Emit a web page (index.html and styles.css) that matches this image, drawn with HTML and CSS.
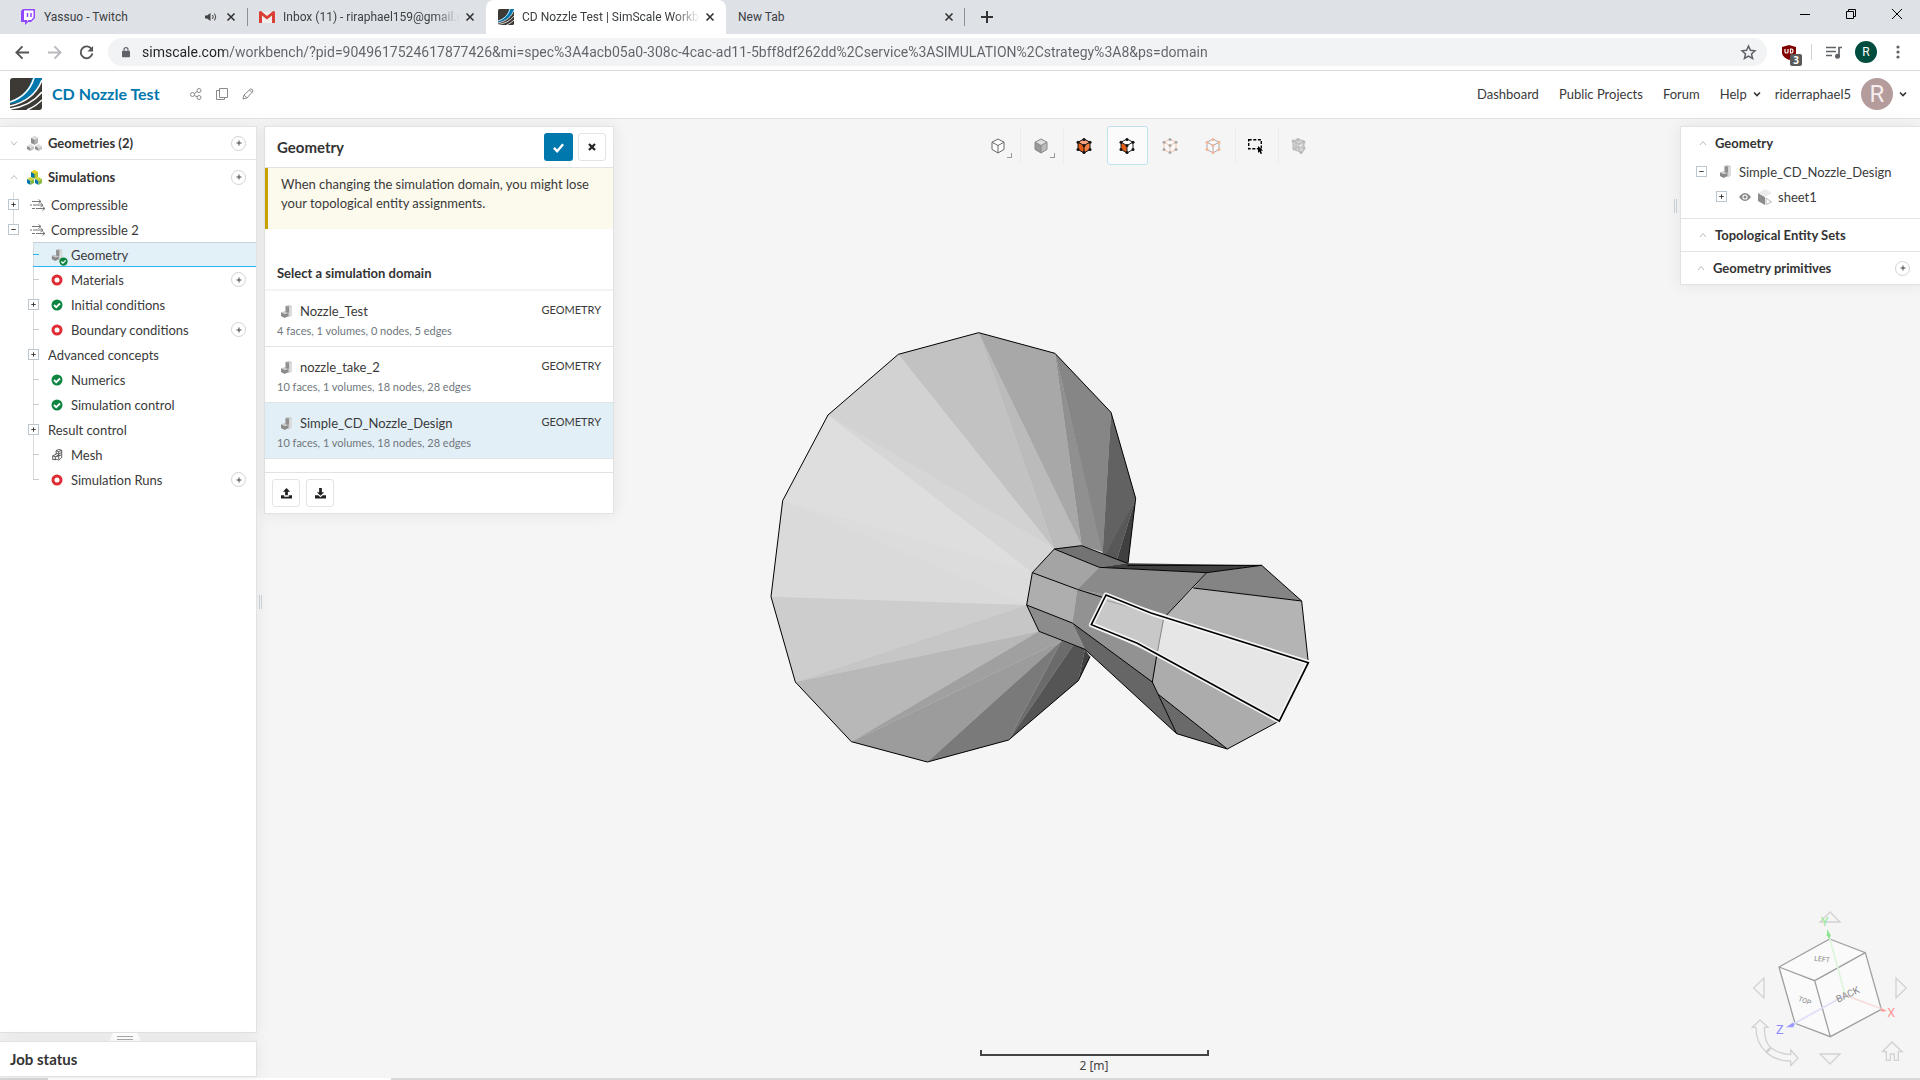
FILE: index.html
```html
<!DOCTYPE html>
<html lang="en">
<head>
<meta charset="utf-8">
<title>CD Nozzle Test | SimScale Workbench</title>
<link rel="stylesheet" href="styles.css">
</head>
<body>
<svg class="sprite" aria-hidden="true">
  <symbol id="x" viewBox="0 0 10 10"><path d="M1.5 1.5l7 7M8.500 1.500l-7 7" stroke="currentColor" stroke-width="1.600" fill="none"/></symbol>
  <symbol id="plus" viewBox="0 0 10 10"><path d="M2.500 5h5M5 2.500v5" stroke="currentColor" fill="none"/></symbol>
  <symbol id="minus" viewBox="0 0 10 10"><path d="M2.500 5h5" stroke="currentColor" fill="none"/></symbol>
  <symbol id="up" viewBox="0 0 8 8"><path d="M1 6l3-3.500L7 6" stroke="currentColor" fill="none"/></symbol>
  <symbol id="down" viewBox="0 0 8 8"><path d="M1 2.500L4 6l3-3.500" stroke="currentColor" fill="none"/></symbol>
  <symbol id="logo" viewBox="0 0 32 32"><rect width="32" height="32" rx="3" fill="#3d3935"/><path d="M22 0h10v2C27 16 16 24 0 26v-3C12 19 19 12 22 0z" fill="#0077ad"/><path d="M24 0C20 13 12 20 0 24M32 2C27 15 18 24 0 28M32 14C24 24 14 29 0 31M32 22c-5 5-10 8-15 10" fill="none" stroke="#fff" stroke-width="1.600"/></symbol>
  <symbol id="part" viewBox="0 0 12 14"><path d="M5 1l3-1 4 1v10l-3 2-4-1z" fill="#c4c4c4"/><path d="M5 1l4 1v6L5 9z" fill="#909090"/><path d="M9 2l3-1v10l-3 2z" fill="#dcdcdc"/><path d="M0 8l4-1 4 2v3l-4 2-4-2z" fill="#8a8a8a"/><path d="M0 8l4-1 4 2-4 1z" fill="#ccc"/></symbol>
  <symbol id="cubes" viewBox="0 0 15 15"><path d="M7.500 0L11 2v5L7.500 9 4 7V2z" fill="#b2b2b2"/><path d="M7.500 0L11 2 7.500 4 4 2zM3.500 8L7 10l-3.500 2L0 10zM11.500 8L15 10l-3.500 2L8 10z" fill="#ddd"/><path d="M0 10l3.500 2v3L0 13zM8 10l3.500 2v3L8 13zM4 2l3.500 2v4L4 7z" fill="#8c8c8c"/><path d="M7 10v3l-3.500 2v-3zM15 10v3l-3.500 2v-3z" fill="#c4c4c4"/></symbol>
  <symbol id="cubes-color" viewBox="0 0 15 15"><path d="M7.500 0L11 2v5L7.500 9 4 7V2z" fill="#b5c326"/><path d="M7.500 0L11 2 7.500 4 4 2z" fill="#f0d526"/><path d="M3.500 7L7 9 3.500 11 0 9zM11.500 7L15 9l-3.500 2L8 9z" fill="#cbd33a"/><path d="M0 9l3.500 2v4L0 13zM8 9l3.500 2v4L8 13zM4 2l3.500 2v4L4 7z" fill="#0075ac"/><path d="M7 9v4l-3.500 2v-4zM15 9v4l-3.500 2v-4z" fill="#86b942"/></symbol>
  <symbol id="flow" viewBox="0 0 15 12"><path d="M2 2.500h9M0 6h2m1 0h10M2 9.500h3m1 0h9M8.500 .5l2.500 2-2.500 2M10.500 4l2.500 2-2.500 2M12.500 7.500l2.500 2-2.500 2" fill="none" stroke="#777"/></symbol>
  <symbol id="ring" viewBox="0 0 12 12"><circle cx="6" cy="6" r="4" fill="none" stroke="#e02d36" stroke-width="3"/></symbol>
  <symbol id="ok" viewBox="0 0 12 12"><circle cx="6" cy="6" r="5.500" fill="#0d8440"/><path d="M3 6l2.200 2.200L9 4.500" fill="none" stroke="#fff" stroke-width="1.800"/></symbol>
  <symbol id="mesh" viewBox="0 0 12 14"><path d="M5 2l3-1.500 3.500 1V10L8 13l-3-1-4 .5V8l4-2zM5 2l3 1v9M8 3l3.500-1.500M1 8l3 1v4M4 9l4-2M5 5l3 1 3.500-2M5 9l6-2" fill="none" stroke="#444"/></symbol>
  <symbol id="cube" viewBox="0 0 16 16"><path d="M8 1l6 3.200v7.200L8 15l-6-3.600V4.200z" class="f"/><path d="M2 4.200L8 7.500v7.500l-6-3.600z" class="l"/><path d="M8 1l6 3.200-6 3.300-6-3.300z" class="t"/><path d="M8 1l6 3.200v7.200L8 15l-6-3.600V4.200zM2 4.200l6 3.300 6-3.300M8 7.500V15" class="s"/></symbol>
  <symbol id="dots" viewBox="0 0 16 16"><g fill="currentColor"><circle cx="8" cy="1.500" r="1.500"/><circle cx="14" cy="4.200" r="1.500"/><circle cx="14" cy="11.400" r="1.500"/><circle cx="8" cy="14.500" r="1.500"/><circle cx="2" cy="11.400" r="1.500"/><circle cx="2" cy="4.200" r="1.500"/><circle cx="8" cy="7.500" r="1.500"/></g></symbol>
</svg>

<header class="browser">
  <div class="tabs">
    <div class="tab">
      <svg class="fav" viewBox="0 0 16 16"><path d="M1 2l2-2h12v9l-4 4H8l-3 3v-3H1z" fill="#9146ff"/><path d="M4 1.500h9.500v7L11 11H8.500L7 12.500V11H4z" fill="#fff"/><path d="M7.500 4v4M11 4v4" stroke="#9146ff" stroke-width="1.500"/></svg>
      <span class="tab-title">Yassuo - Twitch</span>
      <svg class="sound" viewBox="0 0 12 10"><path d="M0 3.500h2L5.500 1v8L2 6.500H0z" fill="#444"/><path d="M7.500 3q1.500 2 0 4M9.500 1.500q2.500 3.500 0 7" fill="none" stroke="#444"/></svg>
      <button class="close" aria-label="Close tab"><svg><use href="#x"/></svg></button>
    </div>
    <div class="tab ruled">
      <svg class="fav" viewBox="0 0 16 16"><path d="M1 3h14v11H1z" fill="#f1eeee"/><path d="M0 14V3q1-1.500 2.500-.5L8 7l5.500-4.500Q15 1.500 16 3v11h-3V6.500l-5 4-5-4V14z" fill="#d93f35"/></svg>
      <span class="tab-title fade">Inbox (11) - riraphael159@gmail.c</span>
      <button class="close" aria-label="Close tab"><svg><use href="#x"/></svg></button>
    </div>
    <div class="tab active">
      <svg class="fav" viewBox="0 0 16 16"><use href="#logo"/></svg>
      <span class="tab-title fade">CD Nozzle Test | SimScale Workbe</span>
      <button class="close" aria-label="Close tab"><svg><use href="#x"/></svg></button>
    </div>
    <div class="tab last">
      <span class="tab-title">New Tab</span>
      <button class="close" aria-label="Close tab"><svg><use href="#x"/></svg></button>
    </div>
    <button class="newtab" aria-label="New tab"><svg viewBox="0 0 12 12"><path d="M6 0v12M0 6h12" stroke="#333" stroke-width="2"/></svg></button>
    <div class="window">
      <button aria-label="Minimize"><svg viewBox="0 0 10 10"><path d="M0 5.500h10" stroke="#000"/></svg></button>
      <button aria-label="Restore"><svg viewBox="0 0 10 10"><path d="M.5 2.500h7v7h-7zM2.500 2V.5h7v7H8" stroke="#000" fill="none"/></svg></button>
      <button aria-label="Close window"><svg viewBox="0 0 10 10"><path d="M0 0l10 10M10 0L0 10" stroke="#000"/></svg></button>
    </div>
  </div>
  <div class="nav">
    <button aria-label="Back"><svg viewBox="0 0 16 16"><path d="M15 8H2M8 1.500L1.500 8 8 14.500" fill="none" stroke="#555" stroke-width="2"/></svg></button>
    <button aria-label="Forward"><svg viewBox="0 0 16 16"><path d="M1 8h13M8 1.500L14.500 8 8 14.500" fill="none" stroke="#b8babd" stroke-width="2"/></svg></button>
    <button aria-label="Reload"><svg viewBox="0 0 16 16"><path d="M13.500 4.500A6.300 6.300 0 1 0 14.300 9" fill="none" stroke="#555" stroke-width="2"/><path d="M15 1v6H9z" fill="#555"/></svg></button>
    <div class="omnibox">
      <svg class="lock" viewBox="0 0 10 13"><rect y="5" width="10" height="8" rx="1" fill="#5f6368"/><path d="M2.500 5V3.500a2.500 2.500 0 0 1 5 0V5" fill="none" stroke="#5f6368" stroke-width="1.500"/></svg>
      <input class="url" type="text" aria-label="Address" value="simscale.com/workbench/?pid=9049617524617877426&amp;mi=spec%3A4acb05a0-308c-4cac-ad11-5bff8df262dd%2Cservice%3ASIMULATION%2Cstrategy%3A8&amp;ps=domain">
      <button aria-label="Bookmark"><svg class="star" viewBox="0 0 14 14"><path d="M7 1l1.800 4 4.200.4-3.200 2.900 1 4.300L7 10.400l-3.800 2.200 1-4.300L1 5.400 5.200 5z" fill="none" stroke="#5f6368" stroke-width="1.400"/></svg></button>
    </div>
    <div class="ext"><svg viewBox="0 0 14 15"><path d="M7 0l7 2v5c0 4-3 6-7 8-4-2-7-4-7-8V2z" fill="#800000"/><path d="M3 4v3q0 1 1.500 1T6 7V4M8.500 4v4h1Q11 8 11 6T9.500 4z" stroke="#fff" stroke-width="1.200" fill="none"/></svg><span class="badge">3</span></div>
    <span class="vr"></span>
    <svg class="music" viewBox="0 0 16 13"><path d="M0 1.500h10M0 5.500h10M0 9.500h6M13 10V1.500h3" stroke="#5f6368" stroke-width="1.700" fill="none"/><circle cx="11.500" cy="10.200" r="2.500" fill="#5f6368"/></svg>
    <span class="me">R</span>
    <button aria-label="Menu"><svg class="dots" viewBox="0 0 4 14"><g fill="#5f6368"><circle cx="2" cy="2" r="1.600"/><circle cx="2" cy="7" r="1.600"/><circle cx="2" cy="12" r="1.600"/></g></svg></button>
  </div>
</header>

<header class="app">
  <svg class="logo" viewBox="0 0 32 32"><use href="#logo"/></svg>
  <h1>CD Nozzle Test</h1>
  <div class="tools">
    <button aria-label="Share"><svg viewBox="0 0 12 12"><g fill="none" stroke="#8a8a8a"><circle cx="2.500" cy="6.500" r="2"/><circle cx="9" cy="2.500" r="2"/><circle cx="9" cy="9.500" r="2"/><path d="M4.300 5.500l3-2M4.300 7.500l3 1.300"/></g></svg></button>
    <button aria-label="Copy"><svg viewBox="0 0 12 12"><path d="M3.500.5h8v9h-8zM3.500 2.500h-3v9h8v-2" fill="none" stroke="#8a8a8a"/></svg></button>
    <button aria-label="Edit"><svg viewBox="0 0 12 12"><path d="M1 11l1-4 6.500-6q2-.5 2.500 2L5 10zM7.500 2l2.500 2.500M2 7l3 3" fill="none" stroke="#8a8a8a"/></svg></button>
  </div>
  <nav>
    <a href="#">Dashboard</a><a href="#">Public Projects</a><a href="#">Forum</a>
    <a href="#" class="help">Help <svg viewBox="0 0 8 8"><path d="M1 2.500l3 3 3-3" stroke="#333" stroke-width="1.600" fill="none"/></svg></a>
    <a href="#" class="user">riderraphael5 <span class="avatar">R</span><svg viewBox="0 0 8 8"><path d="M1 2.500l3 3 3-3" stroke="#333" stroke-width="1.600" fill="none"/></svg></a>
  </nav>
</header>

<main>
  <svg class="scene" viewBox="-2280 -603 5760 2877" aria-label="Nozzle model">
    <g>
      <path fill="#dadada" d="M656 38L885 100 1053 277 1127 535 1104 730 990 1010 955 1082 746 1260 502 1326 274 1265 106 1086 33 830 68 542 204 285 415 103z"/>
      <path fill="#d2d2d2" d="M204 285L415 103 883 687z"/><path fill="#d6d6d6" d="M204 285L883 687 817 758z"/>
      <path fill="#c2c2c2" d="M415 103L656 38 883 687z"/><path fill="#bbb" d="M656 38L965 677 883 687z"/>
      <path fill="#a8a8a8" d="M656 38L885 100 965 677z"/><path fill="#909090" d="M885 100L1028 695 965 677z"/>
      <path fill="#868686" d="M885 100L1053 277 1028 702z"/><path fill="#626262" d="M1053 277L1127 535 1040 705 1028 700z"/>
      <path fill="#585858" d="M1127 535L1070 722 1036 705z"/><path fill="#404040" d="M1127 535L1104 730 1070 722z"/>
      <path fill="#dedede" d="M204 285L68 542 817 758z"/><path fill="#dcdcdc" d="M68 542L800 855 817 758z"/>
      <path fill="#cdcdcd" d="M33 830L106 1086 800 855z"/><path fill="#c6c6c6" d="M106 1086L800 855 837 934z"/>
      <path fill="#b8b8b8" d="M106 1086L274 1265 837 934z"/><path fill="#a0a0a0" d="M274 1265L837 934 905 962z"/>
      <path fill="#9c9c9c" d="M274 1265L502 1326 905 962z"/><path fill="#7a7a7a" d="M502 1326L746 1260 905 962z"/>
      <path fill="#6b6b6b" d="M746 1260L905 962 940 975z"/><path fill="#555" d="M746 1260L955 1082 975 988 940 975z"/>
      <path fill="#404040" d="M955 1082L990 1010 975 988z"/>
      <path fill="#737373" d="M883 687L965 677 1102 730 1018 742z"/><path fill="#a4a4a4" d="M883 687L1018 742 952 808 817 758z"/>
      <path fill="#aeaeae" d="M817 758L952 808 937 909 800 855z"/><path fill="#8c8c8c" d="M800 855L937 909 975 988 837 934z"/>
      <path fill="#404040" d="M1018 742L1102 730 1505 736 1340 758z"/>
      <path fill="#8a8a8a" d="M1018 742L1340 758 1220 885 1038 825 952 808z"/>
      <path fill="#929292" d="M952 808L1038 825 1200 1010 1177 1086 937 909z"/>
      <path fill="#666" d="M937 909L1177 1086 1250 1241 975 988z"/>
      <path fill="#848484" d="M1340 758L1505 736 1625 843 1300 804z"/>
      <path fill="#b4b4b4" d="M1300 804L1625 843 1645 1028 1215 890z"/>
      <path fill="#acacac" d="M1190 1008L1558 1203 1402 1287 1195 1123 1178 1087z"/>
      <path fill="#6a6a6a" d="M1178 1087L1195 1123 1402 1287 1250 1241z"/>
      <path fill="#c8c8c8" d="M1038 825L1215 892 1190 1008 994 914z"/>
      <path fill="#e6e6e6" d="M1215 890L1645 1028 1558 1203 1190 1008z"/>
    </g>
    <g fill="none" stroke="#000" stroke-width="3">
      <path d="M1104 730L1127 535 1053 277 885 100 656 38 415 103 204 285 68 542 33 830 106 1086 274 1265 502 1326 746 1260 955 1082 990 1010"/>
      <path d="M1102 730L965 677 883 687 817 758 800 855 837 934 975 988 1250 1241 1402 1287 1558 1203M883 687L1018 742 1340 758 1505 736H1102M817 758L952 808 1030 833M800 855L937 909 1177 1086 1250 1241M1177 1086L1190 1008M1195 1123L1402 1287M1340 758L1220 885M1300 804L1625 843M1505 736L1625 843 1645 1028"/>
    </g>
    <path d="M1210 900L1193 993" stroke="#888" stroke-width="3"/><path d="M1042 842L1120 863" stroke="#999" stroke-width="3"/>
    <path d="M1038 825L1173 879 1645 1028 1558 1203 1132 970 994 914z" fill="none" stroke="#f5f5f5" stroke-width="15" stroke-linejoin="round"/>
    <path d="M1038 825L1173 879 1645 1028 1558 1203 1132 970 994 914z" fill="none" stroke="#000" stroke-width="5"/>
  </svg>

  <div class="left">
    <aside class="tree">
      <section class="head"><svg class="chev"><use href="#down"/></svg><svg class="i15"><use href="#cubes"/></svg><h2>Geometries (2)</h2><button class="add" aria-label="Add geometry"><svg><use href="#plus"/></svg></button></section>
      <section class="head sims"><svg class="chev"><use href="#up"/></svg><svg class="i15"><use href="#cubes-color"/></svg><h2>Simulations</h2><button class="add" aria-label="Add simulation"><svg><use href="#plus"/></svg></button></section>
      <ul class="roots">
        <li class="row"><button class="tog" aria-label="Expand"><svg><use href="#plus"/></svg></button><svg class="flow"><use href="#flow"/></svg><span>Compressible</span></li>
        <li class="row end"><button class="tog" aria-label="Collapse"><svg><use href="#minus"/></svg></button><svg class="flow"><use href="#flow"/></svg><span>Compressible 2</span></li>
      </ul>
      <ul class="kids">
        <li class="row selected"><i class="dash"></i><span class="ic"><svg class="part"><use href="#part"/></svg><svg class="sub"><use href="#ok"/></svg></span><span>Geometry</span></li>
        <li class="row"><i class="dash"></i><span class="ic"><svg><use href="#ring"/></svg></span><span>Materials</span><button class="add" aria-label="Add material"><svg><use href="#plus"/></svg></button></li>
        <li class="row"><button class="tog" aria-label="Expand"><svg><use href="#plus"/></svg></button><span class="ic"><svg><use href="#ok"/></svg></span><span>Initial conditions</span></li>
        <li class="row"><i class="dash"></i><span class="ic"><svg><use href="#ring"/></svg></span><span>Boundary conditions</span><button class="add" aria-label="Add boundary condition"><svg><use href="#plus"/></svg></button></li>
        <li class="row plain"><button class="tog" aria-label="Expand"><svg><use href="#plus"/></svg></button><span>Advanced concepts</span></li>
        <li class="row"><i class="dash"></i><span class="ic"><svg><use href="#ok"/></svg></span><span>Numerics</span></li>
        <li class="row"><i class="dash"></i><span class="ic"><svg><use href="#ok"/></svg></span><span>Simulation control</span></li>
        <li class="row plain"><button class="tog" aria-label="Expand"><svg><use href="#plus"/></svg></button><span>Result control</span></li>
        <li class="row"><i class="dash"></i><span class="ic"><svg><use href="#mesh"/></svg></span><span>Mesh</span></li>
        <li class="row end"><i class="dash"></i><span class="ic"><svg><use href="#ring"/></svg></span><span>Simulation Runs</span><button class="add" aria-label="Add run"><svg><use href="#plus"/></svg></button></li>
      </ul>
    </aside>
    <button class="grip" aria-label="Resize job status"><svg viewBox="0 0 32 8"><path d="M4 0h24l4 8H0z" fill="#fff"/><path d="M8 3.500h16M8 6.500h16" stroke="#aaa"/></svg></button>
    <section class="jobs"><h2>Job status</h2></section>
  </div>

  <i class="handle mid"></i>

  <section class="panel">
    <header><h2>Geometry</h2>
      <button class="primary" aria-label="Confirm"><svg viewBox="0 0 12 12"><path d="M1 6.500L4.500 10 11 2.500" fill="none" stroke="#fff" stroke-width="2.600"/></svg></button>
      <button class="box" aria-label="Close"><svg viewBox="0 0 8 8"><path d="M1 1l6 6M7 1L1 7" stroke="#222" stroke-width="2.200"/></svg></button>
    </header>
    <p class="warn">When changing the simulation domain, you might lose your topological entity assignments.</p>
    <h3>Select a simulation domain</h3>
    <ul>
      <li><div class="name"><svg><use href="#part"/></svg><span>Nozzle_Test</span><em>GEOMETRY</em></div><small>4 faces, 1 volumes, 0 nodes, 5 edges</small></li>
      <li><div class="name"><svg><use href="#part"/></svg><span>nozzle_take_2</span><em>GEOMETRY</em></div><small>10 faces, 1 volumes, 18 nodes, 28 edges</small></li>
      <li class="on"><div class="name"><svg><use href="#part"/></svg><span>Simple_CD_Nozzle_Design</span><em>GEOMETRY</em></div><small>10 faces, 1 volumes, 18 nodes, 28 edges</small></li>
    </ul>
    <footer>
      <button class="box" aria-label="Upload"><svg viewBox="0 0 12 12"><path d="M6 0l4 4H7.500v4h-3V4H2z M0 8h3.500v1.500h5V8H12v3.500H0z" fill="#222"/></svg></button>
      <button class="box" aria-label="Download"><svg viewBox="0 0 12 12"><path d="M6 8.500l4-4H7.500V0h-3v4.500H2z M0 8h3.500l2.500 2 2.500-2H12v3.500H0z" fill="#222"/></svg></button>
    </footer>
  </section>

  <div class="center">
    <div class="modes">
      <button class="cube wire more" aria-label="Wireframe"><svg><use href="#cube"/></svg></button><i></i>
      <button class="cube grey more" aria-label="Shading"><svg><use href="#cube"/></svg></button><i></i>
      <button class="cube orange" aria-label="Select volumes"><svg><use href="#cube"/><use href="#dots"/></svg></button>
      <button class="cube face current" aria-label="Select faces"><svg><use href="#cube"/><use href="#dots"/></svg></button>
      <button class="cube edge" aria-label="Select edges"><svg><use href="#cube"/><use href="#dots"/></svg></button>
      <button class="cube node" aria-label="Select nodes"><svg><use href="#cube"/><use href="#dots"/></svg></button><i></i>
      <button aria-label="Box selection"><svg viewBox="0 0 16 16"><path d="M.7 1.700h12.600v9H.7z" fill="none" stroke="#000" stroke-width="1.400" stroke-dasharray="3 1.600"/><path d="M10 8l5 4.500-2 .3 1 2.700-1.400.5-1.200-2.600L10 15z" fill="#000"/></svg></button><i></i>
      <button class="cube off" aria-label="Mesh clip"><svg viewBox="0 0 16 16"><path d="M2 3l5-2 6 2v9l-2 3-9-4zM2 3l6 3v7M8 6l5-3M5 2v10M2 7l6 3 5-3" fill="#ccc" stroke="#aaa"/><g fill="#aaa"><circle cx="2" cy="3" r="1.500"/><circle cx="7" cy="1.500" r="1.500"/><circle cx="13" cy="4" r="1.500"/><circle cx="13" cy="10" r="1.500"/><circle cx="10" cy="14.500" r="1.500"/><circle cx="3" cy="11" r="1.500"/></g></svg></button>
    </div>
    <div class="scale"><div class="bar"></div><span>2 [m]</span></div>
  </div>

  <i class="handle right"></i>

  <aside class="objects">
    <section class="objtree">
      <h2><svg class="chev"><use href="#up"/></svg>Geometry</h2>
      <ul>
        <li class="o1"><button class="tog" aria-label="Collapse"><svg><use href="#minus"/></svg></button><svg class="part"><use href="#part"/></svg><span>Simple_CD_Nozzle_Design</span></li>
        <li class="o2"><button class="tog" aria-label="Expand"><svg><use href="#plus"/></svg></button><svg class="eye" viewBox="0 0 12 8"><path d="M0 4q6-8 12 0-6 8-12 0z" fill="#8c8c8c"/><circle cx="6" cy="4" r="2.600" fill="#fff"/><circle cx="6" cy="4" r="1.500" fill="#8c8c8c"/></svg><svg class="sheet" viewBox="0 0 14 16"><path d="M0 4l7 4v8l-7-4z" fill="#8c8c8c"/><path d="M0 4l7-4 7 4-7 4z" fill="#ececec"/><path d="M8 9l5.500 4L8 15.500z" fill="#fff" stroke="#bbb"/></svg><span>sheet1</span></li>
      </ul>
    </section>
    <h2><svg class="chev"><use href="#up"/></svg>Topological Entity Sets</h2>
    <h2 class="prim"><svg class="chev"><use href="#up"/></svg>Geometry primitives<button class="add" aria-label="Add primitive"><svg><use href="#plus"/></svg></button></h2>
  </aside>

  <svg class="viewcube" viewBox="0 0 540 534" aria-label="View cube">
    <g fill="none" stroke="#d2d2d2" stroke-width="4"><path d="M240 66h60l-30-30zM240 462h60l-30 30zM72 234v60l-31-30zM468 234v60l31-30zM60 360l24 22H73q0 44 18 60L78 455Q48 430 48 382H37zM80 458l14-14q24 18 58 20v-14l22 24-22 23v-14Q110 484 80 458zM427 455l29-29 30 29h-11v26h-12v-19h-12v19h-12v-26z"/></g>
    <path d="M269 117l107 41 48 170-153 82-106-40L117 201z" fill="#fafafa"/>
    <path d="M269 117l107 41 48 170-153 82-106-40L117 201zM117 201l107 41 152-84M224 242l47 168" fill="none" stroke="#a0a0a0" stroke-width="4"/>
    <path d="M316 286L268 112" stroke="#dcf5dc" stroke-width="5"/><path d="M316 286L160 372" stroke="#dedef8" stroke-width="5"/><path d="M316 286l112 42" stroke="#f8dcdc" stroke-width="5"/>
    <path d="M262 88l10 18-4 12-8-12z" fill="#8fe58f"/><path d="M138 382l20-14 6 4-4 10z" fill="#9a9aff"/><path d="M441 333l-20-10 4 12z" fill="#ff9a9a"/>
    <g class="axes"><text x="243" y="79" fill="#96ea96">Y</text><text x="108" y="401" fill="#8c8cff">Z</text><text x="442" y="350" fill="#ff9696">X</text></g>
    <g class="faces"><text transform="translate(294 308) rotate(-25)" font-size="29">BACK</text><text transform="translate(173 302) rotate(20)" font-size="21">TOP</text><text transform="translate(222 182) rotate(6)" font-size="21">LEFT</text></g>
  </svg>
</main>
<div class="strip"></div>
</body>
</html>
```
FILE: styles.css
```css
* { box-sizing: border-box; }
body { margin: 0; height: 100vh; display: flex; flex-direction: column; overflow: hidden; font: 13px/20px Lato, "Liberation Sans", sans-serif; color: #3a3a3a; background: #f5f5f5; }
button { border: 0; padding: 0; background: none; display: flex; align-items: center; justify-content: center; flex: none; }
svg { flex: none; display: block; overflow: visible; }
h1, h2, h3, ul, p { margin: 0; padding: 0; list-style: none; }
h2, h3 { font-size: 13px; line-height: 20px; font-weight: 700; color: #333; }
a { color: inherit; text-decoration: none; }
.sprite { display: none; }

/* Browser window */
.browser { background: #fff; border-bottom: 1px solid #d9dadc; font-family: "Noto Sans", "Open Sans", sans-serif; font-weight: 400; }
.tabs { display: flex; height: 34px; background: #dee1e6; }
.tab { display: flex; align-items: center; width: 239px; padding: 0 10px 0 12px; font: 12px/20px Roboto, "Open Sans", sans-serif; color: #3c4043; }
.tab:first-child { width: 247px; padding-left: 20px; }
.tab.ruled { background: linear-gradient(#8c8f94, #8c8f94) 0 8px / 1px 18px no-repeat; }
.tab.active { background: #fff; border-radius: 8px 8px 0 0; width: 240px; }
.tab.last { background: linear-gradient(#8c8f94, #8c8f94) 100% 8px / 1px 18px no-repeat; }
.tab-title { flex: 1; overflow: hidden; white-space: nowrap; margin: 0 8px; }
.tab.last .tab-title { margin-left: 0; }
.fade { margin-right: 4px; mask-image: linear-gradient(90deg, #000 85%, transparent); }
.fav { width: 16px; height: 16px; }
.sound { width: 12px; height: 10px; margin-right: 8px; }
.close { width: 12px; height: 12px; color: #333; }
.close svg { width: 10px; height: 10px; }
.newtab { width: 44px; }
.newtab svg { width: 12px; height: 12px; }
.window { display: flex; margin-left: auto; }
.window button { width: 46px; height: 28px; }
.window svg { width: 10px; height: 10px; }
.nav { display: flex; align-items: center; height: 36px; padding: 0 6px; }
.nav > button { width: 32px; height: 32px; }
.nav > button svg { width: 15px; height: 15px; }
.omnibox { flex: 1; display: flex; align-items: center; height: 28px; margin: 0 15px 0 6px; padding: 0 11px 0 14px; border-radius: 14px; background: #f1f3f4; }
.lock { width: 8px; height: 12px; margin-right: 12px; }
.url { flex: 1; min-width: 0; border: 0; padding: 0; outline: 0; font: 14px/20px Roboto, "Open Sans", sans-serif; color: transparent; background: linear-gradient(90deg, #202124 83px, #5f6368 83px); background-clip: text; -webkit-background-clip: text; }
.star { width: 15px; height: 15px; }
.ext { position: relative; }
.ext svg { width: 14px; height: 15px; }
.badge { position: absolute; left: 8px; top: 9px; width: 12px; height: 12px; border-radius: 2px; background: #5a5a5a; color: #fff; font: 700 10px/12px "Open Sans", sans-serif; text-align: center; }
.vr { width: 1px; height: 16px; background: #d0d2d5; margin: 0 14px 0 15px; }
.music { width: 16px; height: 13px; }
.me { width: 22px; height: 22px; margin: 0 5px 0 13px; border-radius: 50%; background: #004d40; color: #fff; font: 12px/22px Roboto, sans-serif; text-align: center; }
.nav .dots { width: 4px; height: 14px; }

/* Application header */
.app { display: flex; align-items: center; height: 48px; padding: 0 13px 1px 10px; background: #fff; border-bottom: 1px solid #e2e2e2; }
.logo { width: 32px; height: 32px; }
h1 { margin-left: 10px; font-size: 16px; line-height: 20px; font-weight: 700; color: #0077ad; }
.tools { display: flex; gap: 14px; margin-left: 30px; }
.tools svg { width: 12px; height: 12px; }
nav { display: flex; align-items: center; gap: 20px; margin-left: auto; }
nav a { display: flex; align-items: center; }
nav svg { width: 8px; height: 8px; margin-left: 6px; }
.help { margin-right: -6px; }
.avatar { width: 32px; height: 32px; margin-left: 10px; border-radius: 50%; background: #b59c9c; color: #f5eeee; font: 24px/32px Roboto, sans-serif; text-align: center; }

/* Workspace */
main { position: relative; flex: 1; min-height: 0; display: flex; align-items: flex-start; padding-top: 7px; }
.scene { position: absolute; inset: 0; width: 100%; height: 100%; }
.left { position: relative; z-index: 1; display: flex; flex-direction: column; width: 257px; height: 100%; }
.tree, .jobs, .panel, .objects { background: #fff; border: 1px solid #e0e2e4; box-shadow: 0 0 16px rgba(0, 0, 0, .07); }
.tree { flex: 1; border-left: 0; }
.head { display: flex; align-items: center; height: 33px; padding: 0 10px; border-bottom: 1px solid #e4e4e4; }
.sims { height: 32px; padding-top: 2px; border: 0; }
.chev { width: 8px; height: 8px; color: #b8bcc0; }
.head .chev { margin-right: 9px; }
.i15 { width: 15px; height: 15px; margin-right: 6px; }
.add { width: 15px; height: 15px; margin-left: auto; border: 1px solid #cfd4d8; border-radius: 50%; color: #444; }
.add svg { width: 10px; height: 10px; }
.row { display: flex; align-items: center; height: 25px; padding-right: 10px; background: linear-gradient(#d8dcdf, #d8dcdf) 0 0 / 1px 100% no-repeat; }
.row.end { background-size: 1px 50%; }
.roots { margin-left: 13px; }
.kids { margin-left: 33px; }
.tog { width: 11px; height: 11px; margin: 0 11px 0 -5px; border: 1px solid #bcc6cf; background: #fff; color: #333; }
.tog svg { width: 9px; height: 9px; }
.flow { width: 15px; height: 12px; margin-right: 6px; }
.dash { width: 6px; height: 1px; background: #c8ccd0; }
.ic { position: relative; width: 12px; height: 14px; display: flex; align-items: center; margin: 0 8px 0 12px; }
.ic svg { width: 12px; height: 12px; }
.tog + .ic { margin-left: 1px; }
.plain .tog { margin-right: 9px; }
.row.selected { background-color: #e2f0f8; border-top: 1px solid #c6d0d8; border-bottom: 1px solid #29b6f6; }
.selected .dash { background: #29b6f6; }
.ic .sub { position: absolute; left: 8px; top: 9px; width: 9px; height: 9px; }
.grip { align-self: center; width: 32px; height: 8px; margin-right: 8px; }
.grip svg { width: 32px; height: 8px; }
.jobs { height: 36px; padding: 7px 10px; border-left: 0; margin-bottom: 1px; }
.jobs h2 { font-size: 15px; }
.handle { width: 3px; height: 14px; border: solid #cdd5dc; border-width: 0 1px; }
.mid { align-self: center; margin: 0 2px; }

.panel { position: relative; width: 350px; }
.panel header { display: flex; align-items: center; height: 41px; padding: 0 7px 0 12px; border-bottom: 1px solid #e0e2e4; }
.panel header h2 { margin-right: auto; font-size: 15px; }
.box, .primary { width: 28px; height: 28px; border: 1px solid #e4e4e4; border-radius: 3px; background: #fff; }
.primary { width: 29px; margin-right: 5px; border: 0; background: #0077ad; }
.primary svg, footer svg { width: 11px; height: 11px; }
header .box svg { width: 8px; height: 8px; }
.warn { height: 61px; padding: 7px 13px; border-left: 3px solid #c9a200; background: #fcf9ed; line-height: 19px; }
.panel h3 { padding: 34px 12px 6px; border-bottom: 2px solid #f3f4f5; }
.panel li { height: 56px; padding: 10px 12px 6px; border-bottom: 1px solid #e2e4e6; }
.panel li.on { background: #e3eff7; }
.name { display: flex; align-items: center; height: 20px; }
.name svg { width: 11px; height: 13px; margin: 0 8px 0 4px; }
.name em { align-self: flex-start; margin-left: auto; font-size: 11px; line-height: 18px; font-style: normal; }
.panel small { display: block; font-size: 11px; line-height: 20px; color: #6f777d; }
.panel footer { display: flex; gap: 6px; margin-top: 13px; padding: 6px 7px; border-top: 1px solid #e0e2e4; }

.center { position: relative; flex: 1; align-self: stretch; display: flex; flex-direction: column; align-items: center; justify-content: space-between; min-width: 0; padding-bottom: 2px; }
.modes { display: flex; align-items: center; height: 39px; gap: 2px; margin-left: 9px; }
.modes > i { width: 1px; height: 36px; margin: 0 -2px 0 -1px; background: #ececec; }
.modes button { width: 41px; height: 39px; border: 1px solid transparent; border-radius: 3px; }
.modes svg { width: 16px; height: 16px; }
.modes .more { position: relative; }
.more::after { content: ""; position: absolute; right: 6px; bottom: 6px; width: 4px; height: 4px; border: solid #999; border-width: 0 1px 1px 0; }
.modes .current { background: #fbfbfb; border-color: #bfe2f0; }
.cube { --f: #fff; --l: #fff; --t: #fff; --s: #666; color: #111; }
.f { fill: var(--f); } .l { fill: var(--l); } .t { fill: var(--t); } .s { fill: none; stroke: var(--s); }
.grey { --f: #bbb; --l: #999; --t: #ddd; --s: #888; }
.orange { --f: #f57e42; --l: #e35d16; --t: #f7a27c; --s: #111; }
.face { --l: #e35d16; --s: #222; }
.edge { --f: #f8f8f8; --l: #f8f8f8; --t: #f8f8f8; --s: #f7c5ad; color: #aaa; }
.node { --f: #f8f8f8; --l: #f8f8f8; --t: #f8f8f8; --s: #aaa; color: #f5b698; }
.off { opacity: .8; }
.scale { width: 229px; text-align: center; font: 12px/20px "Noto Sans", sans-serif; color: #444; margin-left: -100px; }
.bar { height: 6px; border: 2px solid #444; border-top: 0; }

.right { margin: 73px 3px 0 0; }
.objects { position: relative; width: 240px; border-right: 0; }
.objects h2 { display: flex; align-items: center; height: 32px; padding: 0 10px 0 18px; }
.objects h2 .chev { margin-right: 8px; }
.objects > h2 { height: 33px; border-top: 1px solid #e4e4e4; }
.objects .prim { padding-left: 16px; }
.objtree { padding-bottom: 9px; }
.objtree li { display: flex; align-items: center; height: 25px; padding-left: 20px; }
.objtree .o2 { padding-left: 40px; }
.objects .tog { margin-right: 13px; }
.objects .part { width: 11px; height: 13px; margin-right: 8px; }
.objects .o2 .tog { margin-right: 12px; }
.eye { width: 12px; height: 8px; margin-right: 7px; }
.sheet { width: 14px; height: 16px; margin-right: 6px; }
.viewcube { position: absolute; right: 0; bottom: 0; width: 180px; height: 178px; }
.axes { font: 38px Roboto, sans-serif; }
.faces { font-family: Roboto, sans-serif; fill: #888; }
.strip { height: 2px; background: linear-gradient(90deg, #d8d8d8 48px, #fff 48px, #fff 391px, #d8d8d8 391px); }
```
